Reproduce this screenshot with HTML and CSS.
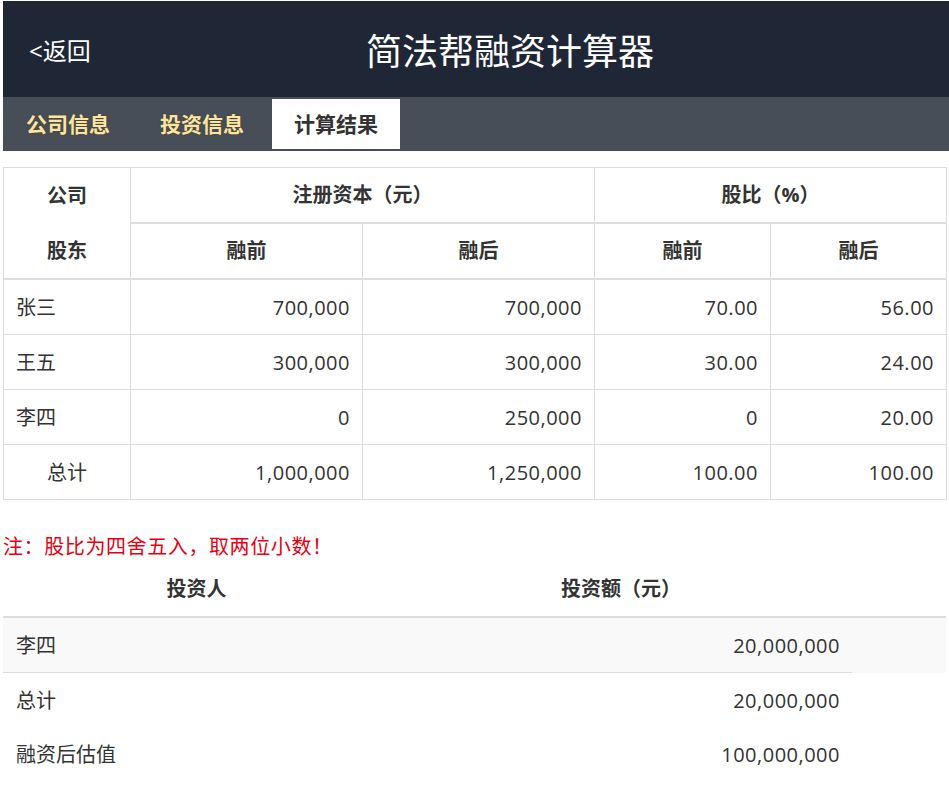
FILE: index.html
```html
<!DOCTYPE html>
<html lang="zh-CN">
  <head>
    <meta charset="UTF-8" />
    <meta name="viewport" content="width=device-width, initial-scale=1.0" />
    <title>简法帮融资计算器</title>
    <link rel="stylesheet" href="styles.css">
  </head>
  <body>
    <header>
      <a class="back" href="#">&lt;返回</a>
      <h1>简法帮融资计算器</h1>
    </header>

    <nav class="tabs">
      <a href="#" class="tab">公司信息</a>
      <a href="#" class="tab">投资信息</a>
      <a href="#" class="tab active">计算结果</a>
    </nav>

    <main>
      <table class="result-table">
        <colgroup>
          <col style="width: 127px" />
          <col style="width: 232px" />
          <col style="width: 232px" />
          <col style="width: 176px" />
          <col style="width: 176px" />
        </colgroup>
        <thead>
          <tr>
            <th rowspan="2" class="corner"><div>公司</div><div>股东</div></th>
            <th colspan="2">注册资本（元）</th>
            <th colspan="2">股比（%）</th>
          </tr>
          <tr>
            <th>融前</th>
            <th>融后</th>
            <th>融前</th>
            <th>融后</th>
          </tr>
        </thead>
        <tbody>
          <tr>
            <td>张三</td>
            <td class="num">700,000</td>
            <td class="num">700,000</td>
            <td class="num">70.00</td>
            <td class="num">56.00</td>
          </tr>
          <tr>
            <td>王五</td>
            <td class="num">300,000</td>
            <td class="num">300,000</td>
            <td class="num">30.00</td>
            <td class="num">24.00</td>
          </tr>
          <tr>
            <td>李四</td>
            <td class="num">0</td>
            <td class="num">250,000</td>
            <td class="num">0</td>
            <td class="num">20.00</td>
          </tr>
          <tr>
            <td class="total">总计</td>
            <td class="num">1,000,000</td>
            <td class="num">1,250,000</td>
            <td class="num">100.00</td>
            <td class="num">100.00</td>
          </tr>
        </tbody>
      </table>

      <p class="note">注：股比为四舍五入，取两位小数！</p>

      <table class="invest-table">
        <colgroup>
          <col style="width: 387px" />
          <col style="width: 462px" />
          <col style="width: 94px" />
        </colgroup>
        <thead>
          <tr>
            <th>投资人</th>
            <th>投资额（元）</th>
            <th></th>
          </tr>
        </thead>
        <tbody>
          <tr class="striped">
            <td>李四</td>
            <td class="num">20,000,000</td>
            <td></td>
          </tr>
          <tr class="sum">
            <td>总计</td>
            <td class="num">20,000,000</td>
          </tr>
          <tr>
            <td>融资后估值</td>
            <td class="num">100,000,000</td>
          </tr>
        </tbody>
      </table>
    </main>
  </body>
</html>
```

FILE: styles.css
```css
* {
  margin: 0;
  padding: 0;
  box-sizing: border-box;
}

body {
  font-family: 'Open Sans', 'Noto Sans CJK SC', sans-serif;
  font-size: 20px;
  color: #333;
  background-color: #fff;
  padding: 1px 3px 0;
  overflow: hidden;
}

header {
  background-color: #1f2737;
  height: 96px;
  margin-right: -3px;
  display: flex;
  align-items: center;
  padding-left: 26px;
}
.back {
  color: #fff;
  text-decoration: none;
  font-size: 24px;
  width: 62px;
  white-space: nowrap;
}
header h1 {
  flex: 1;
  text-align: center;
  color: #fff;
  font-size: 36px;
  font-weight: normal;
  padding-right: 20px;
}

.tabs {
  background-color: #474e57;
  margin-right: -3px;
  height: 54px;
  display: flex;
  gap: 6px;
  padding: 2px 1px;
}
.tab {
  width: 128px;
  height: 50px;
  line-height: 50px;
  text-align: center;
  font-size: 21px;
  font-weight: bold;
  color: #fbe4a4;
  text-decoration: none;
  text-shadow: 0 0 2px rgba(80, 60, 0, 0.6);
}
.tab.active {
  background-color: #fff;
  color: #333;
  text-shadow: none;
}

main {
  padding-top: 16px;
}

table {
  border-collapse: collapse;
  table-layout: fixed;
  width: 943px;
}
th,
td {
  line-height: 30px;
  padding: 12px;
}
td {
  padding-top: 13px;
  padding-bottom: 11px;
}
th {
  font-weight: bold;
  text-align: center;
}
.num {
  text-align: right;
  letter-spacing: 0.5px;
}

.result-table {
  border: 1px solid #ddd;
}
.result-table th,
.result-table td {
  border: 1px solid #ddd;
}
.result-table thead th {
  border-bottom: 2px solid #ddd;
}
.result-table th.corner {
  padding: 0;
}
.corner div {
  height: 55px;
  line-height: 55px;
}
.result-table td.total {
  text-align: center;
}

.note {
  color: #e60012;
  line-height: 30px;
  margin-top: 32px;
  letter-spacing: 0.6px;
}

.invest-table thead th {
  border-bottom: 2px solid #ddd;
}
.invest-table td {
  padding-left: 13px;
}
.invest-table tr.striped td {
  background-color: #f9f9f9;
}
.invest-table tr.sum td {
  border-top: 1px solid #ddd;
}
```
